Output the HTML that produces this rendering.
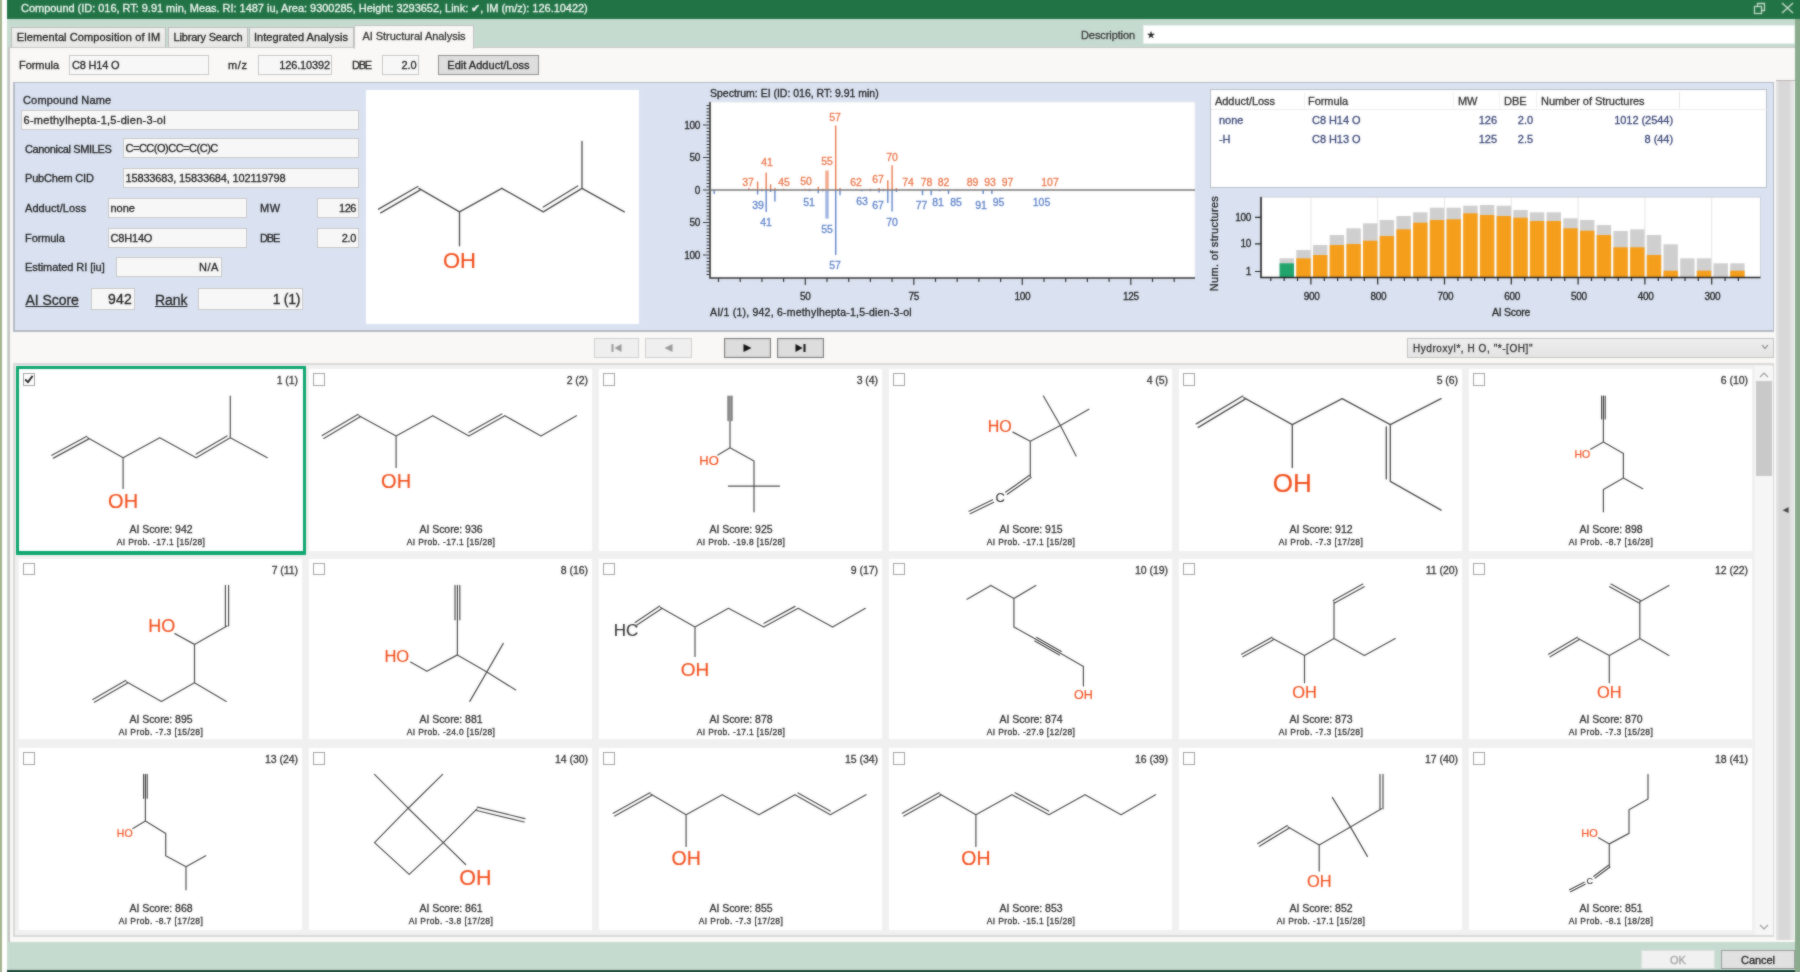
<!DOCTYPE html>
<html><head><meta charset="utf-8"><title>AI Structural Analysis</title>
<style>
html,body{margin:0;padding:0;}
body{width:1800px;height:972px;position:relative;overflow:hidden;background:#f9f8f7;font-family:"Liberation Sans",sans-serif;}
body div{position:absolute;box-sizing:border-box;}
.t{white-space:nowrap;letter-spacing:-0.05px;-webkit-text-stroke:0.3px currentColor;}
.inp{background:#f7f7f7;border:1px solid #c6c6c6;box-shadow:inset 0 0 0 1px #fbfbfb;}
svg{position:absolute;left:0;top:0;overflow:visible;}
svg text{font-family:"Liberation Sans",sans-serif;}
#w{left:-20px;top:-20px;width:1840px;height:1012px;filter:url(#soft);}
#c{left:20px;top:20px;width:1800px;height:972px;}
</style></head><body>
<svg width="0" height="0" style="position:absolute"><defs><filter id="soft" x="0" y="0" width="100%" height="100%" color-interpolation-filters="sRGB"><feGaussianBlur stdDeviation="0.8" result="b"/><feComposite in="SourceGraphic" in2="b" operator="arithmetic" k1="0" k2="0.5" k3="0.5" k4="0"/></filter></defs></svg>
<div id="w"><div id="c">
<div style="left:-20px;top:-20px;width:22.4px;height:1012px;background:#a3b48e;"></div>
<div style="left:2.4px;top:-20px;width:5px;height:1012px;background:#ffffff;"></div>
<div style="left:7px;top:18px;width:1788px;height:952px;background:#c6dbd0;"></div>
<div style="left:1795px;top:0px;width:25px;height:992px;background:#8aab8e;"></div>
<div style="left:7px;top:-20px;width:1813px;height:38.5px;background:#217346;"></div>
<div class="t" style="top:0.6px;height:14px;line-height:14px;font-size:11px;color:#f4f8f4;left:21px;letter-spacing:-0.03px;">Compound (ID: 016, RT: 9.91 min, Meas. RI: 1487 iu, Area: 9300285, Height: 3293652, Link: &#10004;, IM (m/z): 126.10422)</div>
<svg width="1800" height="20"><g fill="none" stroke="#c3d8c6" stroke-width="1.3"><rect x="1754.5" y="6.5" width="7" height="7"/><path d="M1757.5 6.5v-3h7v7h-3"/><path d="M1782 3l11 10M1793 3l-11 10" stroke-width="1.5"/></g></svg>
<div style="left:7px;top:969.5px;width:1788px;height:23px;background:#1e4a3c;"></div>
<div style="left:8px;top:47px;width:1787px;height:894.5px;background:#f9f8f7;border-left:2px solid #c4c4c4;border-top:1px solid #c8c8c8;"></div>
<div style="left:1776px;top:80px;width:19px;height:860px;background:linear-gradient(to right,#e3e3e3 0,#e1e1e1 2px,#d8d8d8 3px,#d8d8d8 13.5px,#e2e2e2 14.5px,#e6e6e6 17.5px,#f8f8f8 18.2px);border-top:1px solid #bdb6b3;"></div>
<div class="t" style="top:505.8px;height:8px;line-height:8px;font-size:6.5px;color:#444;left:1778.5px;width:14px;text-align:center;">&#9664;</div>
<div style="left:11px;top:27px;width:155px;height:20px;background:linear-gradient(#efefee,#e8e8e7);border:1px solid #bcbcbc;border-bottom:none;"></div>
<div class="t" style="top:30.0px;height:14px;line-height:14px;font-size:11px;color:#222;left:11.0px;width:155px;text-align:center;letter-spacing:0.10px;">Elemental Composition of IM</div>
<div style="left:168px;top:27px;width:80px;height:20px;background:linear-gradient(#efefee,#e8e8e7);border:1px solid #bcbcbc;border-bottom:none;"></div>
<div class="t" style="top:30.0px;height:14px;line-height:14px;font-size:11px;color:#222;left:168.0px;width:80px;text-align:center;letter-spacing:-0.19px;">Library Search</div>
<div style="left:248.5px;top:27px;width:105.0px;height:20px;background:linear-gradient(#efefee,#e8e8e7);border:1px solid #bcbcbc;border-bottom:none;"></div>
<div class="t" style="top:30.0px;height:14px;line-height:14px;font-size:11px;color:#222;left:248.5px;width:105.0px;text-align:center;letter-spacing:0.06px;">Integrated Analysis</div>
<div style="left:354px;top:24.5px;width:120px;height:24.5px;background:#f9f8f7;border:1px solid #c2c2c2;border-bottom:none;"></div>
<div class="t" style="top:29.0px;height:14px;line-height:14px;font-size:11px;color:#333;left:354.0px;width:120px;text-align:center;letter-spacing:-0.04px;">AI Structural Analysis</div>
<div class="t" style="top:28.0px;height:14px;line-height:14px;font-size:11px;color:#3a3a3a;left:1081px;letter-spacing:-0.09px;">Description</div>
<div style="left:1143px;top:24.5px;width:652px;height:19px;background:#fff;border:1px solid #eaf0ec;"></div>
<div class="t" style="top:29.5px;height:11px;line-height:11px;font-size:8.5px;color:#222;left:1146.5px;">&#9733;</div>
<div class="t" style="top:58.0px;height:14px;line-height:14px;font-size:11px;color:#222;left:19px;letter-spacing:-0.05px;">Formula</div>
<div class="inp" style="left:69px;top:55px;width:140px;height:20px;"></div>
<div class="t" style="top:58.0px;height:14px;line-height:14px;font-size:11px;color:#222;left:72px;letter-spacing:-0.20px;">C8 H14 O</div>
<div class="t" style="top:58.0px;height:14px;line-height:14px;font-size:11px;color:#222;left:228px;letter-spacing:0.63px;">m/z</div>
<div class="inp" style="left:258px;top:55px;width:74px;height:20px;"></div>
<div class="t" style="top:58.0px;height:14px;line-height:14px;font-size:11px;color:#222;right:1470px;text-align:right;letter-spacing:-0.14px;">126.10392</div>
<div class="t" style="top:58.0px;height:14px;line-height:14px;font-size:11px;color:#222;left:352px;letter-spacing:-1.21px;">DBE</div>
<div class="inp" style="left:382px;top:55px;width:37px;height:20px;"></div>
<div class="t" style="top:58.0px;height:14px;line-height:14px;font-size:11px;color:#222;right:1383.5px;text-align:right;letter-spacing:-0.10px;">2.0</div>
<div style="left:438px;top:55px;width:101px;height:20px;background:#dedede;border:1px solid #8f8f8f;"></div>
<div class="t" style="top:58.0px;height:14px;line-height:14px;font-size:11px;color:#222;left:438.0px;width:101px;text-align:center;letter-spacing:0.02px;">Edit Adduct/Loss</div>
<div style="left:13px;top:82px;width:1761px;height:250px;background:#dae2f1;border:1px solid #b3b8c3;border-width:1px 1px 2px 2px;"></div>
<div class="t" style="top:93.0px;height:14px;line-height:14px;font-size:11px;color:#222;left:23px;letter-spacing:0.16px;">Compound Name</div>
<div class="inp" style="left:21px;top:110px;width:338px;height:20px;"></div>
<div class="t" style="top:113.0px;height:14px;line-height:14px;font-size:11px;color:#222;left:23.5px;letter-spacing:0.27px;">6-methylhepta-1,5-dien-3-ol</div>
<div class="t" style="top:142.0px;height:14px;line-height:14px;font-size:11px;color:#222;left:25px;letter-spacing:-0.37px;">Canonical SMILES</div>
<div class="inp" style="left:123px;top:138px;width:236px;height:20px;"></div>
<div class="t" style="top:141.0px;height:14px;line-height:14px;font-size:11px;color:#222;left:125.5px;letter-spacing:-0.49px;">C=CC(O)CC=C(C)C</div>
<div class="t" style="top:171.0px;height:14px;line-height:14px;font-size:11px;color:#222;left:25px;letter-spacing:-0.20px;">PubChem CID</div>
<div class="inp" style="left:123px;top:168px;width:236px;height:20px;"></div>
<div class="t" style="top:171.0px;height:14px;line-height:14px;font-size:11px;color:#222;left:125.5px;letter-spacing:-0.15px;">15833683, 15833684, 102119798</div>
<div class="t" style="top:201.0px;height:14px;line-height:14px;font-size:11px;color:#222;left:25px;letter-spacing:0.08px;">Adduct/Loss</div>
<div class="inp" style="left:108px;top:198px;width:139px;height:20px;"></div>
<div class="t" style="top:201.0px;height:14px;line-height:14px;font-size:11px;color:#222;left:110.5px;letter-spacing:-0.04px;">none</div>
<div class="t" style="top:201.0px;height:14px;line-height:14px;font-size:11px;color:#222;left:260px;letter-spacing:0.58px;">MW</div>
<div class="inp" style="left:317px;top:198px;width:42px;height:20px;"></div>
<div class="t" style="top:201.0px;height:14px;line-height:14px;font-size:11px;color:#222;right:1444px;text-align:right;letter-spacing:-0.45px;">126</div>
<div class="t" style="top:231.0px;height:14px;line-height:14px;font-size:11px;color:#222;left:25px;letter-spacing:-0.09px;">Formula</div>
<div class="inp" style="left:108px;top:228px;width:139px;height:20px;"></div>
<div class="t" style="top:231.0px;height:14px;line-height:14px;font-size:11px;color:#222;left:110.5px;letter-spacing:-0.18px;">C8H14O</div>
<div class="t" style="top:231.0px;height:14px;line-height:14px;font-size:11px;color:#222;left:260px;letter-spacing:-1.11px;">DBE</div>
<div class="inp" style="left:317px;top:228px;width:42px;height:20px;"></div>
<div class="t" style="top:231.0px;height:14px;line-height:14px;font-size:11px;color:#222;right:1444px;text-align:right;letter-spacing:-0.33px;">2.0</div>
<div class="t" style="top:260.0px;height:14px;line-height:14px;font-size:11px;color:#222;left:25px;letter-spacing:-0.06px;">Estimated RI [iu]</div>
<div class="inp" style="left:116px;top:257px;width:106px;height:20px;"></div>
<div class="t" style="top:260.0px;height:14px;line-height:14px;font-size:11px;color:#222;right:1581px;text-align:right;letter-spacing:0.55px;">N/A</div>
<div class="t" style="top:291.0px;height:18px;line-height:18px;font-size:14px;color:#222;left:25.5px;letter-spacing:-0.05px;text-decoration:underline;">AI Score</div>
<div class="inp" style="left:91px;top:288px;width:44px;height:22px;"></div>
<div class="t" style="top:290.0px;height:18px;line-height:18px;font-size:14px;color:#222;right:1668px;text-align:right;letter-spacing:0.21px;">942</div>
<div class="t" style="top:291.0px;height:18px;line-height:18px;font-size:14px;color:#222;left:155px;letter-spacing:-0.10px;text-decoration:underline;">Rank</div>
<div class="inp" style="left:198px;top:288px;width:105px;height:22px;"></div>
<div class="t" style="top:290.0px;height:18px;line-height:18px;font-size:14px;color:#222;right:1500px;text-align:right;letter-spacing:-0.30px;">1 (1)</div>
<div style="left:366px;top:90px;width:273px;height:234px;background:#fff;"></div>
<div class="t" style="top:86.0px;height:14px;line-height:14px;font-size:10.5px;color:#222;left:710px;letter-spacing:-0.01px;">Spectrum: EI (ID: 016, RT: 9.91 min)</div>
<svg width="1800" height="340"><rect x="710" y="102" width="485" height="176" fill="#fff" stroke="#e6e9ee" stroke-width="1"/><path d="M710 102V278H1195" fill="none" stroke="#333" stroke-width="1.6"/><path d="M710 190H1195" stroke="#777" stroke-width="1.2"/><path d="M706.5 274.5H710M706.5 271.2H710M706.5 268.0H710M706.5 264.8H710M706.5 261.5H710M706.5 258.2H710M703.0 255.0H710M706.5 251.8H710M706.5 248.5H710M706.5 245.2H710M706.5 242.0H710M706.5 238.8H710M706.5 235.5H710M706.5 232.2H710M706.5 229.0H710M706.5 225.8H710M703.0 222.5H710M706.5 219.2H710M706.5 216.0H710M706.5 212.8H710M706.5 209.5H710M706.5 206.2H710M706.5 203.0H710M706.5 199.8H710M706.5 196.5H710M706.5 193.2H710M703.0 190.0H710M706.5 186.8H710M706.5 183.5H710M706.5 180.2H710M706.5 177.0H710M706.5 173.8H710M706.5 170.5H710M706.5 167.2H710M706.5 164.0H710M706.5 160.8H710M703.0 157.5H710M706.5 154.2H710M706.5 151.0H710M706.5 147.8H710M706.5 144.5H710M706.5 141.2H710M706.5 138.0H710M706.5 134.8H710M706.5 131.5H710M706.5 128.2H710M703.0 125.0H710M706.5 121.8H710M706.5 118.5H710M706.5 115.2H710M706.5 112.0H710M706.5 108.8H710M706.5 105.5H710" stroke="#333" stroke-width="1"/><path d="M718.5 278V282M740.2 278V282M761.9 278V282M783.6 278V282M805.3 278V285M827.0 278V282M848.7 278V282M870.4 278V282M892.1 278V282M913.8 278V285M935.5 278V282M957.2 278V282M978.9 278V282M1000.6 278V282M1022.3 278V285M1044.0 278V282M1065.7 278V282M1087.4 278V282M1109.1 278V282M1130.8 278V285M1152.5 278V282M1174.2 278V282" stroke="#333" stroke-width="1.2"/><path d="M748.9 190V188.1M753.2 190V188.7M757.6 190V181.6M761.9 190V188.7M766.2 190V172.4M770.6 190V184.2M774.9 190V188.1M783.6 190V188.7M805.3 190V188.7M809.6 190V188.7M818.3 190V186.8M822.7 190V188.7M835.7 190V125.6M840.0 190V188.1M857.4 190V189.3M870.4 190V188.7M879.1 190V188.1M883.4 190V188.7M887.8 190V180.2M892.1 190V165.3M896.4 190V188.1M909.5 190V189.3M944.2 190V189.3M974.6 190V189.3M1009.3 190V189.3M1052.7 190V189.3" stroke="#e9774c" stroke-width="1.4"/><path d="M714.2 190V193.9M757.6 190V194.6M761.9 190V191.3M766.2 190V212.1M770.6 190V191.9M774.9 190V201.4M809.6 190V191.3M818.3 190V193.2M822.7 190V191.3M835.7 190V255.0M840.0 190V195.2M861.7 190V191.3M870.4 190V191.3M879.1 190V192.6M883.4 190V191.3M887.8 190V203.0M892.1 190V211.4M896.4 190V191.9M922.5 190V195.2M931.2 190V195.2M939.8 190V191.3M948.5 190V193.9M957.2 190V190.7M983.2 190V193.9M991.9 190V193.9M1000.6 190V190.7M1044.0 190V190.7" stroke="#5f83c9" stroke-width="1.4"/><path d="M827.0 190V170.5" stroke="#f1a98b" stroke-width="3.4"/><path d="M827.0 190V218.6" stroke="#9fb5e1" stroke-width="3.4"/><path d="M710 190H1195" stroke="#777" stroke-width="1.2"/><g font-size="10.5" fill="#e9774c" stroke="#e9774c" stroke-width="0.3" text-anchor="middle"><text x="748" y="185.5">37</text><text x="767" y="165.5">41</text><text x="784" y="185.5">45</text><text x="806" y="184.5">50</text><text x="827" y="164.5">55</text><text x="835" y="120.5">57</text><text x="856" y="185.5">62</text><text x="878" y="182.5">67</text><text x="892" y="160.5">70</text><text x="908" y="185.5">74</text><text x="926.5" y="185.5">78</text><text x="943.5" y="185.5">82</text><text x="972.5" y="185.5">89</text><text x="990" y="185.5">93</text><text x="1007.5" y="185.5">97</text><text x="1050" y="185.5">107</text></g><g font-size="10.5" fill="#5f83c9" stroke="#5f83c9" stroke-width="0.3" text-anchor="middle"><text x="758" y="208.5">39</text><text x="766" y="225.5">41</text><text x="809" y="205.5">51</text><text x="827" y="232.5">55</text><text x="835" y="268.5">57</text><text x="862" y="204.5">63</text><text x="878" y="208.5">67</text><text x="892" y="225.5">70</text><text x="921.5" y="209.0">77</text><text x="938" y="206.0">81</text><text x="956" y="205.5">85</text><text x="981" y="208.5">91</text><text x="998.5" y="205.5">95</text><text x="1041.5" y="206.0">105</text></g><g font-size="10" fill="#222" stroke="#222" stroke-width="0.3" text-anchor="end" letter-spacing="-0.3"><text x="700" y="128.5">100</text><text x="700" y="161.0">50</text><text x="700" y="193.5">0</text><text x="700" y="226.0">50</text><text x="700" y="258.5">100</text></g><g font-size="10" fill="#222" stroke="#222" stroke-width="0.3" text-anchor="middle" letter-spacing="-0.3"><text x="805.3" y="300">50</text><text x="913.8" y="300">75</text><text x="1022.3" y="300">100</text><text x="1130.8" y="300">125</text></g></svg>
<div class="t" style="top:305.0px;height:14px;line-height:14px;font-size:10.5px;color:#222;left:710px;letter-spacing:0.22px;">AI/1 (1), 942, 6-methylhepta-1,5-dien-3-ol</div>
<div style="left:1210px;top:89px;width:557px;height:99px;background:#fff;border:1px solid #b9bdc6;"></div>
<div style="left:1211px;top:109px;width:556px;height:1px;background:#ececec;"></div>
<div style="left:1679px;top:92px;width:1px;height:16px;background:#e2e2e2;"></div>
<div style="left:1304px;top:92px;width:1px;height:16px;background:#f0f0f0;"></div>
<div style="left:1453px;top:92px;width:1px;height:16px;background:#f0f0f0;"></div>
<div style="left:1499px;top:92px;width:1px;height:16px;background:#f0f0f0;"></div>
<div style="left:1536px;top:92px;width:1px;height:16px;background:#f0f0f0;"></div>
<div class="t" style="top:94.0px;height:14px;line-height:14px;font-size:11px;color:#333;left:1215px;">Adduct/Loss</div>
<div class="t" style="top:94.0px;height:14px;line-height:14px;font-size:11px;color:#333;left:1308px;">Formula</div>
<div class="t" style="top:94.0px;height:14px;line-height:14px;font-size:11px;color:#333;left:1458px;">MW</div>
<div class="t" style="top:94.0px;height:14px;line-height:14px;font-size:11px;color:#333;left:1504px;">DBE</div>
<div class="t" style="top:94.0px;height:14px;line-height:14px;font-size:11px;color:#333;left:1541px;">Number of Structures</div>
<div class="t" style="top:113.0px;height:14px;line-height:14px;font-size:11px;color:#3c4877;left:1219px;">none</div>
<div class="t" style="top:113.0px;height:14px;line-height:14px;font-size:11px;color:#3c4877;left:1312px;">C8 H14 O</div>
<div class="t" style="top:113.0px;height:14px;line-height:14px;font-size:11px;color:#3c4877;right:303px;text-align:right;">126</div>
<div class="t" style="top:113.0px;height:14px;line-height:14px;font-size:11px;color:#3c4877;right:267px;text-align:right;">2.0</div>
<div class="t" style="top:113.0px;height:14px;line-height:14px;font-size:11px;color:#3c4877;right:127px;text-align:right;">1012 (2544)</div>
<div class="t" style="top:132.0px;height:14px;line-height:14px;font-size:11px;color:#3c4877;left:1219px;">-H</div>
<div class="t" style="top:132.0px;height:14px;line-height:14px;font-size:11px;color:#3c4877;left:1312px;">C8 H13 O</div>
<div class="t" style="top:132.0px;height:14px;line-height:14px;font-size:11px;color:#3c4877;right:303px;text-align:right;">125</div>
<div class="t" style="top:132.0px;height:14px;line-height:14px;font-size:11px;color:#3c4877;right:267px;text-align:right;">2.5</div>
<div class="t" style="top:132.0px;height:14px;line-height:14px;font-size:11px;color:#3c4877;right:127px;text-align:right;">8 (44)</div>
<svg width="1800" height="340"><rect x="1261" y="197" width="499.5" height="80.5" fill="#fff" stroke="#c9ced8" stroke-width="1"/><path d="M1310.9 197V277.5M1377.7 197V277.5M1444.5 197V277.5M1511.3 197V277.5M1578.1 197V277.5M1644.9 197V277.5M1711.7 197V277.5" stroke="#e4e4e4" stroke-width="1"/><rect x="1279.6" y="258.3" width="14.4" height="19.2" fill="#cfcfcf"/><rect x="1279.6" y="263.3" width="14.4" height="14.2" fill="#21a56d"/><rect x="1296.3" y="250.0" width="14.4" height="27.5" fill="#cfcfcf"/><rect x="1296.3" y="258.3" width="14.4" height="19.2" fill="#f59e1b"/><rect x="1313.0" y="245.0" width="14.4" height="32.5" fill="#cfcfcf"/><rect x="1313.0" y="255.0" width="14.4" height="22.5" fill="#f59e1b"/><rect x="1329.7" y="235.0" width="14.4" height="42.5" fill="#cfcfcf"/><rect x="1329.7" y="245.0" width="14.4" height="32.5" fill="#f59e1b"/><rect x="1346.4" y="228.3" width="14.4" height="49.2" fill="#cfcfcf"/><rect x="1346.4" y="244.0" width="14.4" height="33.5" fill="#f59e1b"/><rect x="1363.0" y="223.3" width="14.4" height="54.2" fill="#cfcfcf"/><rect x="1363.0" y="240.7" width="14.4" height="36.8" fill="#f59e1b"/><rect x="1379.7" y="220.0" width="14.4" height="57.5" fill="#cfcfcf"/><rect x="1379.7" y="236.0" width="14.4" height="41.5" fill="#f59e1b"/><rect x="1396.4" y="216.0" width="14.4" height="61.5" fill="#cfcfcf"/><rect x="1396.4" y="229.3" width="14.4" height="48.2" fill="#f59e1b"/><rect x="1413.1" y="212.3" width="14.4" height="65.2" fill="#cfcfcf"/><rect x="1413.1" y="222.7" width="14.4" height="54.8" fill="#f59e1b"/><rect x="1429.8" y="207.7" width="14.4" height="69.8" fill="#cfcfcf"/><rect x="1429.8" y="220.0" width="14.4" height="57.5" fill="#f59e1b"/><rect x="1446.5" y="207.7" width="14.4" height="69.8" fill="#cfcfcf"/><rect x="1446.5" y="219.3" width="14.4" height="58.2" fill="#f59e1b"/><rect x="1463.2" y="205.7" width="14.4" height="71.8" fill="#cfcfcf"/><rect x="1463.2" y="213.3" width="14.4" height="64.2" fill="#f59e1b"/><rect x="1479.9" y="205.0" width="14.4" height="72.5" fill="#cfcfcf"/><rect x="1479.9" y="215.0" width="14.4" height="62.5" fill="#f59e1b"/><rect x="1496.6" y="205.7" width="14.4" height="71.8" fill="#cfcfcf"/><rect x="1496.6" y="216.0" width="14.4" height="61.5" fill="#f59e1b"/><rect x="1513.3" y="210.0" width="14.4" height="67.5" fill="#cfcfcf"/><rect x="1513.3" y="217.7" width="14.4" height="59.8" fill="#f59e1b"/><rect x="1529.9" y="212.3" width="14.4" height="65.2" fill="#cfcfcf"/><rect x="1529.9" y="221.0" width="14.4" height="56.5" fill="#f59e1b"/><rect x="1546.6" y="212.3" width="14.4" height="65.2" fill="#cfcfcf"/><rect x="1546.6" y="221.0" width="14.4" height="56.5" fill="#f59e1b"/><rect x="1563.3" y="218.3" width="14.4" height="59.2" fill="#cfcfcf"/><rect x="1563.3" y="228.3" width="14.4" height="49.2" fill="#f59e1b"/><rect x="1580.0" y="220.0" width="14.4" height="57.5" fill="#cfcfcf"/><rect x="1580.0" y="230.7" width="14.4" height="46.8" fill="#f59e1b"/><rect x="1596.7" y="225.0" width="14.4" height="52.5" fill="#cfcfcf"/><rect x="1596.7" y="235.0" width="14.4" height="42.5" fill="#f59e1b"/><rect x="1613.4" y="231.0" width="14.4" height="46.5" fill="#cfcfcf"/><rect x="1613.4" y="247.3" width="14.4" height="30.2" fill="#f59e1b"/><rect x="1630.1" y="229.3" width="14.4" height="48.2" fill="#cfcfcf"/><rect x="1630.1" y="247.3" width="14.4" height="30.2" fill="#f59e1b"/><rect x="1646.8" y="235.0" width="14.4" height="42.5" fill="#cfcfcf"/><rect x="1646.8" y="255.0" width="14.4" height="22.5" fill="#f59e1b"/><rect x="1663.5" y="244.3" width="14.4" height="33.2" fill="#cfcfcf"/><rect x="1663.5" y="270.7" width="14.4" height="6.8" fill="#f59e1b"/><rect x="1680.2" y="258.3" width="14.4" height="19.2" fill="#cfcfcf"/><rect x="1696.8" y="258.3" width="14.4" height="19.2" fill="#cfcfcf"/><rect x="1696.8" y="270.7" width="14.4" height="6.8" fill="#f59e1b"/><rect x="1713.5" y="263.3" width="14.4" height="14.2" fill="#cfcfcf"/><rect x="1730.2" y="263.3" width="14.4" height="14.2" fill="#cfcfcf"/><rect x="1730.2" y="270.7" width="14.4" height="6.8" fill="#f59e1b"/><path d="M1261 197V277.5H1760.5" fill="none" stroke="#222" stroke-width="1.6"/><path d="M1270.8 277.5V281.0M1284.2 277.5V281.0M1297.5 277.5V281.0M1310.9 277.5V284.5M1324.3 277.5V281.0M1337.6 277.5V281.0M1351.0 277.5V281.0M1364.3 277.5V281.0M1377.7 277.5V284.5M1391.1 277.5V281.0M1404.4 277.5V281.0M1417.8 277.5V281.0M1431.1 277.5V281.0M1444.5 277.5V284.5M1457.9 277.5V281.0M1471.2 277.5V281.0M1484.6 277.5V281.0M1497.9 277.5V281.0M1511.3 277.5V284.5M1524.7 277.5V281.0M1538.0 277.5V281.0M1551.4 277.5V281.0M1564.7 277.5V281.0M1578.1 277.5V284.5M1591.5 277.5V281.0M1604.8 277.5V281.0M1618.2 277.5V281.0M1631.5 277.5V281.0M1644.9 277.5V284.5M1658.3 277.5V281.0M1671.6 277.5V281.0M1685.0 277.5V281.0M1698.3 277.5V281.0M1711.7 277.5V284.5M1725.1 277.5V281.0M1738.4 277.5V281.0" stroke="#222" stroke-width="1.2"/><path d="M1255 217.3H1261M1255 243.8H1261M1255 271.5H1261" stroke="#222" stroke-width="1.2"/><g font-size="10" fill="#222" stroke="#222" stroke-width="0.3" text-anchor="end" letter-spacing="-0.3"><text x="1251" y="220.8">100</text><text x="1251" y="247.3">10</text><text x="1251" y="275.0">1</text></g><g font-size="10" fill="#222" stroke="#222" stroke-width="0.3" text-anchor="middle" letter-spacing="-0.3"><text x="1311.7" y="299.5">900</text><text x="1378.5" y="299.5">800</text><text x="1445.3" y="299.5">700</text><text x="1512.1" y="299.5">600</text><text x="1578.9" y="299.5">500</text><text x="1645.7" y="299.5">400</text><text x="1712.5" y="299.5">300</text><text x="1511" y="316" font-size="10.5">AI Score</text><text transform="translate(1218,243.5) rotate(-90)" font-size="11" letter-spacing="0.3">Num. of structures</text></g></svg>
<div style="left:594px;top:337.5px;width:45px;height:20.5px;background:#efefef;border:1px solid #cfcfcf;"></div>
<svg width="1800" height="400"><path d="M611.5 344h2v8h-2z M621.5 344v8l-7-4z" fill="#9a9a9a"/></svg>
<div style="left:645px;top:337.5px;width:47px;height:20.5px;background:#efefef;border:1px solid #cfcfcf;"></div>
<svg width="1800" height="400"><path d="M672.5 344v8l-8-4z" fill="#9a9a9a"/></svg>
<div style="left:724px;top:337.5px;width:47px;height:20.5px;background:#dddddd;border:1px solid #7d7d7d;box-shadow:inset 0 0 0 1px #cfcfcf;"></div>
<svg width="1800" height="400"><path d="M743.5 344v8l8-4z" fill="#111"/></svg>
<div style="left:777px;top:337.5px;width:47px;height:20.5px;background:#dddddd;border:1px solid #7d7d7d;box-shadow:inset 0 0 0 1px #cfcfcf;"></div>
<svg width="1800" height="400"><path d="M803.5 344h2v8h-2z M795.5 344v8l7-4z" fill="#111"/></svg>
<div style="left:1406.5px;top:337.5px;width:367.5px;height:20.5px;background:linear-gradient(#eeeeee,#e4e4e4);border:1px solid #c3c3c3;"></div>
<div class="t" style="top:341.8px;height:13px;line-height:13px;font-size:10px;color:#333;left:1413px;letter-spacing:0.56px;">Hydroxyl*, H O, "*-[OH]"</div>
<svg width="1800" height="400"><path d="M1762 345l3 3.5l3-3.5" fill="none" stroke="#777" stroke-width="1.1"/></svg>
<div style="left:13px;top:363px;width:1761px;height:574px;background:#f0f0f0;border:2px solid #d9d9d9;"></div>
<div style="left:1755px;top:366px;width:18px;height:569px;background:#f6f6f6;"></div>
<div style="left:1756px;top:381px;width:16px;height:95px;background:#c9c9c9;"></div>
<svg width="1800" height="972"><path d="M1760 377l4-4l4 4M1760 925l4 4l4-4" fill="none" stroke="#999" stroke-width="1.1"/></svg>
<div style="left:16px;top:366px;width:289.5px;height:188.5px;background:#fff;border:3px solid #0ba56d;border-bottom-width:4px;"></div>
<div style="left:22.7px;top:373.0px;width:12.5px;height:12.5px;background:#fff;border:1px solid #a2a2a2;"></div>
<svg width="1800" height="972"><path d="M25.2 379.5l2.8 2.6l4.6-6.2" fill="none" stroke="#222" stroke-width="1.8"/></svg>
<div class="t" style="top:372.7px;height:14px;line-height:14px;font-size:10.5px;color:#333;right:1502px;text-align:right;">1 (1)</div>
<div class="t" style="top:522.0px;height:14px;line-height:14px;font-size:10.5px;color:#333;left:61.0px;width:200px;text-align:center;">AI Score: 942</div>
<div class="t" style="top:537.4px;height:11px;line-height:11px;font-size:8.5px;color:#333;left:61.0px;width:200px;text-align:center;letter-spacing:0.35px;">AI Prob. -17.1 [15/28]</div>
<div style="left:309px;top:368.7px;width:282.5px;height:182px;background:#fff;"></div>
<div style="left:312.7px;top:373.0px;width:12.5px;height:12.5px;background:#fff;border:1px solid #a2a2a2;"></div>
<div class="t" style="top:372.7px;height:14px;line-height:14px;font-size:10.5px;color:#333;right:1212px;text-align:right;">2 (2)</div>
<div class="t" style="top:522.0px;height:14px;line-height:14px;font-size:10.5px;color:#333;left:351.0px;width:200px;text-align:center;">AI Score: 936</div>
<div class="t" style="top:537.4px;height:11px;line-height:11px;font-size:8.5px;color:#333;left:351.0px;width:200px;text-align:center;letter-spacing:0.35px;">AI Prob. -17.1 [15/28]</div>
<div style="left:599px;top:368.7px;width:282.5px;height:182px;background:#fff;"></div>
<div style="left:602.7px;top:373.0px;width:12.5px;height:12.5px;background:#fff;border:1px solid #a2a2a2;"></div>
<div class="t" style="top:372.7px;height:14px;line-height:14px;font-size:10.5px;color:#333;right:922px;text-align:right;">3 (4)</div>
<div class="t" style="top:522.0px;height:14px;line-height:14px;font-size:10.5px;color:#333;left:641.0px;width:200px;text-align:center;">AI Score: 925</div>
<div class="t" style="top:537.4px;height:11px;line-height:11px;font-size:8.5px;color:#333;left:641.0px;width:200px;text-align:center;letter-spacing:0.35px;">AI Prob. -19.8 [15/28]</div>
<div style="left:889px;top:368.7px;width:282.5px;height:182px;background:#fff;"></div>
<div style="left:892.7px;top:373.0px;width:12.5px;height:12.5px;background:#fff;border:1px solid #a2a2a2;"></div>
<div class="t" style="top:372.7px;height:14px;line-height:14px;font-size:10.5px;color:#333;right:632px;text-align:right;">4 (5)</div>
<div class="t" style="top:522.0px;height:14px;line-height:14px;font-size:10.5px;color:#333;left:931.0px;width:200px;text-align:center;">AI Score: 915</div>
<div class="t" style="top:537.4px;height:11px;line-height:11px;font-size:8.5px;color:#333;left:931.0px;width:200px;text-align:center;letter-spacing:0.35px;">AI Prob. -17.1 [15/28]</div>
<div style="left:1179px;top:368.7px;width:282.5px;height:182px;background:#fff;"></div>
<div style="left:1182.7px;top:373.0px;width:12.5px;height:12.5px;background:#fff;border:1px solid #a2a2a2;"></div>
<div class="t" style="top:372.7px;height:14px;line-height:14px;font-size:10.5px;color:#333;right:342px;text-align:right;">5 (6)</div>
<div class="t" style="top:522.0px;height:14px;line-height:14px;font-size:10.5px;color:#333;left:1221.0px;width:200px;text-align:center;">AI Score: 912</div>
<div class="t" style="top:537.4px;height:11px;line-height:11px;font-size:8.5px;color:#333;left:1221.0px;width:200px;text-align:center;letter-spacing:0.40px;">AI Prob. -7.3 [17/28]</div>
<div style="left:1469px;top:368.7px;width:282.5px;height:182px;background:#fff;"></div>
<div style="left:1472.7px;top:373.0px;width:12.5px;height:12.5px;background:#fff;border:1px solid #a2a2a2;"></div>
<div class="t" style="top:372.7px;height:14px;line-height:14px;font-size:10.5px;color:#333;right:52px;text-align:right;">6 (10)</div>
<div class="t" style="top:522.0px;height:14px;line-height:14px;font-size:10.5px;color:#333;left:1511.0px;width:200px;text-align:center;">AI Score: 898</div>
<div class="t" style="top:537.4px;height:11px;line-height:11px;font-size:8.5px;color:#333;left:1511.0px;width:200px;text-align:center;letter-spacing:0.40px;">AI Prob. -8.7 [16/28]</div>
<div style="left:19px;top:558.5px;width:282.5px;height:180px;background:#fff;"></div>
<div style="left:22.7px;top:562.8px;width:12.5px;height:12.5px;background:#fff;border:1px solid #a2a2a2;"></div>
<div class="t" style="top:562.5px;height:14px;line-height:14px;font-size:10.5px;color:#333;right:1502px;text-align:right;">7 (11)</div>
<div class="t" style="top:711.8px;height:14px;line-height:14px;font-size:10.5px;color:#333;left:61.0px;width:200px;text-align:center;">AI Score: 895</div>
<div class="t" style="top:727.2px;height:11px;line-height:11px;font-size:8.5px;color:#333;left:61.0px;width:200px;text-align:center;letter-spacing:0.40px;">AI Prob. -7.3 [15/28]</div>
<div style="left:309px;top:558.5px;width:282.5px;height:180px;background:#fff;"></div>
<div style="left:312.7px;top:562.8px;width:12.5px;height:12.5px;background:#fff;border:1px solid #a2a2a2;"></div>
<div class="t" style="top:562.5px;height:14px;line-height:14px;font-size:10.5px;color:#333;right:1212px;text-align:right;">8 (16)</div>
<div class="t" style="top:711.8px;height:14px;line-height:14px;font-size:10.5px;color:#333;left:351.0px;width:200px;text-align:center;">AI Score: 881</div>
<div class="t" style="top:727.2px;height:11px;line-height:11px;font-size:8.5px;color:#333;left:351.0px;width:200px;text-align:center;letter-spacing:0.35px;">AI Prob. -24.0 [15/28]</div>
<div style="left:599px;top:558.5px;width:282.5px;height:180px;background:#fff;"></div>
<div style="left:602.7px;top:562.8px;width:12.5px;height:12.5px;background:#fff;border:1px solid #a2a2a2;"></div>
<div class="t" style="top:562.5px;height:14px;line-height:14px;font-size:10.5px;color:#333;right:922px;text-align:right;">9 (17)</div>
<div class="t" style="top:711.8px;height:14px;line-height:14px;font-size:10.5px;color:#333;left:641.0px;width:200px;text-align:center;">AI Score: 878</div>
<div class="t" style="top:727.2px;height:11px;line-height:11px;font-size:8.5px;color:#333;left:641.0px;width:200px;text-align:center;letter-spacing:0.35px;">AI Prob. -17.1 [15/28]</div>
<div style="left:889px;top:558.5px;width:282.5px;height:180px;background:#fff;"></div>
<div style="left:892.7px;top:562.8px;width:12.5px;height:12.5px;background:#fff;border:1px solid #a2a2a2;"></div>
<div class="t" style="top:562.5px;height:14px;line-height:14px;font-size:10.5px;color:#333;right:632px;text-align:right;">10 (19)</div>
<div class="t" style="top:711.8px;height:14px;line-height:14px;font-size:10.5px;color:#333;left:931.0px;width:200px;text-align:center;">AI Score: 874</div>
<div class="t" style="top:727.2px;height:11px;line-height:11px;font-size:8.5px;color:#333;left:931.0px;width:200px;text-align:center;letter-spacing:0.35px;">AI Prob. -27.9 [12/28]</div>
<div style="left:1179px;top:558.5px;width:282.5px;height:180px;background:#fff;"></div>
<div style="left:1182.7px;top:562.8px;width:12.5px;height:12.5px;background:#fff;border:1px solid #a2a2a2;"></div>
<div class="t" style="top:562.5px;height:14px;line-height:14px;font-size:10.5px;color:#333;right:342px;text-align:right;">11 (20)</div>
<div class="t" style="top:711.8px;height:14px;line-height:14px;font-size:10.5px;color:#333;left:1221.0px;width:200px;text-align:center;">AI Score: 873</div>
<div class="t" style="top:727.2px;height:11px;line-height:11px;font-size:8.5px;color:#333;left:1221.0px;width:200px;text-align:center;letter-spacing:0.40px;">AI Prob. -7.3 [15/28]</div>
<div style="left:1469px;top:558.5px;width:282.5px;height:180px;background:#fff;"></div>
<div style="left:1472.7px;top:562.8px;width:12.5px;height:12.5px;background:#fff;border:1px solid #a2a2a2;"></div>
<div class="t" style="top:562.5px;height:14px;line-height:14px;font-size:10.5px;color:#333;right:52px;text-align:right;">12 (22)</div>
<div class="t" style="top:711.8px;height:14px;line-height:14px;font-size:10.5px;color:#333;left:1511.0px;width:200px;text-align:center;">AI Score: 870</div>
<div class="t" style="top:727.2px;height:11px;line-height:11px;font-size:8.5px;color:#333;left:1511.0px;width:200px;text-align:center;letter-spacing:0.40px;">AI Prob. -7.3 [15/28]</div>
<div style="left:19px;top:747.7px;width:282.5px;height:182.3px;background:#fff;"></div>
<div style="left:22.7px;top:752.0px;width:12.5px;height:12.5px;background:#fff;border:1px solid #a2a2a2;"></div>
<div class="t" style="top:751.7px;height:14px;line-height:14px;font-size:10.5px;color:#333;right:1502px;text-align:right;">13 (24)</div>
<div class="t" style="top:901.0px;height:14px;line-height:14px;font-size:10.5px;color:#333;left:61.0px;width:200px;text-align:center;">AI Score: 868</div>
<div class="t" style="top:916.4px;height:11px;line-height:11px;font-size:8.5px;color:#333;left:61.0px;width:200px;text-align:center;letter-spacing:0.40px;">AI Prob. -8.7 [17/28]</div>
<div style="left:309px;top:747.7px;width:282.5px;height:182.3px;background:#fff;"></div>
<div style="left:312.7px;top:752.0px;width:12.5px;height:12.5px;background:#fff;border:1px solid #a2a2a2;"></div>
<div class="t" style="top:751.7px;height:14px;line-height:14px;font-size:10.5px;color:#333;right:1212px;text-align:right;">14 (30)</div>
<div class="t" style="top:901.0px;height:14px;line-height:14px;font-size:10.5px;color:#333;left:351.0px;width:200px;text-align:center;">AI Score: 861</div>
<div class="t" style="top:916.4px;height:11px;line-height:11px;font-size:8.5px;color:#333;left:351.0px;width:200px;text-align:center;letter-spacing:0.40px;">AI Prob. -3.8 [17/28]</div>
<div style="left:599px;top:747.7px;width:282.5px;height:182.3px;background:#fff;"></div>
<div style="left:602.7px;top:752.0px;width:12.5px;height:12.5px;background:#fff;border:1px solid #a2a2a2;"></div>
<div class="t" style="top:751.7px;height:14px;line-height:14px;font-size:10.5px;color:#333;right:922px;text-align:right;">15 (34)</div>
<div class="t" style="top:901.0px;height:14px;line-height:14px;font-size:10.5px;color:#333;left:641.0px;width:200px;text-align:center;">AI Score: 855</div>
<div class="t" style="top:916.4px;height:11px;line-height:11px;font-size:8.5px;color:#333;left:641.0px;width:200px;text-align:center;letter-spacing:0.40px;">AI Prob. -7.3 [17/28]</div>
<div style="left:889px;top:747.7px;width:282.5px;height:182.3px;background:#fff;"></div>
<div style="left:892.7px;top:752.0px;width:12.5px;height:12.5px;background:#fff;border:1px solid #a2a2a2;"></div>
<div class="t" style="top:751.7px;height:14px;line-height:14px;font-size:10.5px;color:#333;right:632px;text-align:right;">16 (39)</div>
<div class="t" style="top:901.0px;height:14px;line-height:14px;font-size:10.5px;color:#333;left:931.0px;width:200px;text-align:center;">AI Score: 853</div>
<div class="t" style="top:916.4px;height:11px;line-height:11px;font-size:8.5px;color:#333;left:931.0px;width:200px;text-align:center;letter-spacing:0.35px;">AI Prob. -15.1 [15/28]</div>
<div style="left:1179px;top:747.7px;width:282.5px;height:182.3px;background:#fff;"></div>
<div style="left:1182.7px;top:752.0px;width:12.5px;height:12.5px;background:#fff;border:1px solid #a2a2a2;"></div>
<div class="t" style="top:751.7px;height:14px;line-height:14px;font-size:10.5px;color:#333;right:342px;text-align:right;">17 (40)</div>
<div class="t" style="top:901.0px;height:14px;line-height:14px;font-size:10.5px;color:#333;left:1221.0px;width:200px;text-align:center;">AI Score: 852</div>
<div class="t" style="top:916.4px;height:11px;line-height:11px;font-size:8.5px;color:#333;left:1221.0px;width:200px;text-align:center;letter-spacing:0.35px;">AI Prob. -17.1 [15/28]</div>
<div style="left:1469px;top:747.7px;width:282.5px;height:182.3px;background:#fff;"></div>
<div style="left:1472.7px;top:752.0px;width:12.5px;height:12.5px;background:#fff;border:1px solid #a2a2a2;"></div>
<div class="t" style="top:751.7px;height:14px;line-height:14px;font-size:10.5px;color:#333;right:52px;text-align:right;">18 (41)</div>
<div class="t" style="top:901.0px;height:14px;line-height:14px;font-size:10.5px;color:#333;left:1511.0px;width:200px;text-align:center;">AI Score: 851</div>
<div class="t" style="top:916.4px;height:11px;line-height:11px;font-size:8.5px;color:#333;left:1511.0px;width:200px;text-align:center;letter-spacing:0.40px;">AI Prob. -8.1 [18/28]</div>
<svg width="1800" height="972"><path d="M378.5 209.2L417.8 186.5M380.7 212.8L420.0 190.1M418.9 188.3L459.5 211.9M459.5 211.9L459.5 245.8M459.5 211.9L501.8 188.3M501.8 188.3L543.3 211.9M543.3 211.9L582.0 188.3M543.3 207.0L577.7 186.0M582.0 188.3L582.0 141.5M582.0 188.3L624.3 211.9" fill="none" stroke="#4c4c4c" stroke-width="1.35" stroke-linecap="round"/><text x="459.5" y="267.6" font-size="22" fill="#f04e1b" stroke="#f04e1b" stroke-width="0.15" text-anchor="middle">OH</text><path d="M51.8 455.3L86.9 436.3M53.4 458.1L88.5 439.1M87.7 437.7L123.1 457.7M123.1 457.7L123.1 488.5M123.1 457.7L159.8 437.7M159.8 437.7L196.2 457.7M196.2 457.7L230.3 437.7M196.2 454.0L227.0 435.9M230.3 437.7L230.3 396.0M230.3 437.7L267.3 457.7" fill="none" stroke="#4c4c4c" stroke-width="1.2" stroke-linecap="round"/><text x="123.1" y="507.5" font-size="20" fill="#f04e1b" stroke="#f04e1b" stroke-width="0.15" text-anchor="middle">OH</text><path d="M322.2 435.6L358.2 414.3M323.8 438.4L359.8 417.1M359.0 415.7L396.1 436.0M396.1 436.0L396.1 467.5M396.1 436.0L432.8 415.7M432.8 415.7L468.9 436.0M468.9 436.0L504.9 415.7M469.0 432.3L501.7 413.9M504.9 415.7L541.0 436.0M541.0 436.0L576.4 415.7" fill="none" stroke="#4c4c4c" stroke-width="1.2" stroke-linecap="round"/><text x="396.1" y="487.5" font-size="20" fill="#f04e1b" stroke="#f04e1b" stroke-width="0.15" text-anchor="middle">OH</text><path d="M731.9 396.0L731.9 420.6M730.0 396.0L730.0 420.6M728.1 396.0L728.1 420.6M730.0 420.6L730.0 447.8M730.0 447.8L717.9 455.0M730.0 447.8L754.0 461.0M754.0 461.0L754.0 486.2M754.0 486.2L728.4 486.2M754.0 486.2L779.5 486.2M754.0 486.2L754.0 511.8" fill="none" stroke="#4c4c4c" stroke-width="1.2" stroke-linecap="round"/><text x="709" y="465.3" font-size="13" fill="#f04e1b" stroke="#f04e1b" stroke-width="0.15" text-anchor="middle">HO</text><path d="M1030.3 441.3L1012.9 432.1M1030.3 441.3L1060.4 425.5M1060.4 425.5L1043.4 396.0M1060.4 425.5L1088.9 409.2M1060.4 425.5L1076.1 456.0M1030.3 441.3L1030.3 476.4M1031.1 477.5L1007.3 494.3M1029.5 475.3L1005.7 492.1M993.8 502.3L970.2 513.8M992.6 499.7L969.0 511.2" fill="none" stroke="#4c4c4c" stroke-width="1.2" stroke-linecap="round"/><text x="999.8" y="432.2" font-size="16" fill="#f04e1b" stroke="#f04e1b" stroke-width="0.15" text-anchor="middle">HO</text><text x="1000.2" y="502.4" font-size="13" fill="#333" stroke="#333" stroke-width="0.15" text-anchor="middle">C</text><path d="M1196.3 423.9L1242.8 396.0M1198.3 427.3L1244.8 399.4M1243.8 397.7L1292.3 424.6M1292.3 424.6L1292.3 467.5M1292.3 424.6L1342.2 398.7M1342.2 398.7L1390.3 424.6M1390.3 424.6L1441.1 398.7M1390.3 424.6L1390.3 481.3M1386.3 427.0L1386.3 478.9M1390.3 481.3L1441.1 510.1" fill="none" stroke="#4c4c4c" stroke-width="1.35" stroke-linecap="round"/><text x="1292.3" y="492.2" font-size="26" fill="#f04e1b" stroke="#f04e1b" stroke-width="0.15" text-anchor="middle">OH</text><path d="M1605.2 396.0L1605.2 419.0M1603.4 396.0L1603.4 419.0M1601.6 396.0L1601.6 419.0M1603.4 419.0L1603.4 442.0M1603.4 442.0L1590.6 449.2M1603.4 442.0L1623.4 453.4M1623.4 453.4L1623.4 478.0M1623.4 478.0L1642.7 488.8M1623.4 478.0L1603.4 489.5M1603.4 489.5L1603.4 511.8" fill="none" stroke="#4c4c4c" stroke-width="1.2" stroke-linecap="round"/><text x="1582.4" y="457.8" font-size="10.5" fill="#f04e1b" stroke="#f04e1b" stroke-width="0.15" text-anchor="middle">HO</text><path d="M228.6 585.4L228.6 626.0M225.4 585.4L225.4 626.0M227.0 626.0L194.5 644.4M194.5 644.4L174.9 633.6M194.5 644.4L194.5 682.7M194.5 682.7L226.3 701.4M194.5 682.7L161.4 701.4M161.4 701.4L126.4 681.8M127.2 683.2L94.4 702.2M125.6 680.4L92.8 699.4" fill="none" stroke="#4c4c4c" stroke-width="1.2" stroke-linecap="round"/><text x="161.8" y="632.4" font-size="18" fill="#f04e1b" stroke="#f04e1b" stroke-width="0.15" text-anchor="middle">HO</text><path d="M459.8 585.4L459.8 619.8M457.4 585.4L457.4 619.8M455.0 585.4L455.0 619.8M457.4 619.8L457.4 654.9M457.4 654.9L426.9 671.3M426.9 671.3L410.5 662.1M457.4 654.9L486.9 671.9M486.9 671.9L503.3 643.4M486.9 671.9L515.7 690.0M486.9 671.9L469.8 701.4" fill="none" stroke="#4c4c4c" stroke-width="1.2" stroke-linecap="round"/><text x="396.8" y="662.4" font-size="16.5" fill="#f04e1b" stroke="#f04e1b" stroke-width="0.15" text-anchor="middle">HO</text><path d="M635.1 622.4L659.7 606.1M636.9 625.0L661.5 608.7M660.6 607.4L695.0 627.0M695.0 627.0L695.0 656.5M695.0 627.0L728.4 608.3M728.4 608.3L763.8 627.0M763.8 627.0L798.2 608.3M764.0 623.3L795.0 606.4M798.2 608.3L832.6 627.0M832.6 627.0L865.4 608.3" fill="none" stroke="#4c4c4c" stroke-width="1.2" stroke-linecap="round"/><text x="626.1" y="635.7" font-size="17" fill="#333" stroke="#333" stroke-width="0.15" text-anchor="middle">HC</text><text x="695" y="675.8" font-size="19" fill="#f04e1b" stroke="#f04e1b" stroke-width="0.15" text-anchor="middle">OH</text><path d="M967.0 599.2L990.9 585.4M990.9 585.4L1013.9 598.5M1013.9 598.5L1035.8 585.4M1013.9 598.5L1013.9 627.0M1013.9 627.0L1035.8 639.2M1036.8 637.4L1061.4 651.4M1035.8 639.2L1060.4 653.2M1034.8 641.0L1059.4 655.0M1060.4 653.2L1083.4 666.4M1083.4 666.4L1083.4 686.0" fill="none" stroke="#4c4c4c" stroke-width="1.2" stroke-linecap="round"/><text x="1083.4" y="698.7" font-size="12.5" fill="#f04e1b" stroke="#f04e1b" stroke-width="0.15" text-anchor="middle">OH</text><path d="M1241.5 654.2L1272.0 637.2M1242.9 656.8L1273.4 639.8M1272.7 638.5L1304.5 655.5M1304.5 655.5L1304.5 682.7M1304.5 655.5L1334.0 638.5M1334.0 638.5L1364.4 655.5M1364.4 655.5L1395.3 638.5M1334.0 638.5L1334.0 601.8M1333.3 600.5L1362.8 584.1M1334.7 603.1L1364.2 586.7" fill="none" stroke="#4c4c4c" stroke-width="1.2" stroke-linecap="round"/><text x="1304.5" y="697.8" font-size="16.4" fill="#f04e1b" stroke="#f04e1b" stroke-width="0.15" text-anchor="middle">OH</text><path d="M1548.5 654.2L1577.3 637.2M1550.1 656.8L1578.9 639.8M1578.1 638.5L1609.3 655.5M1609.3 655.5L1609.3 682.7M1609.3 655.5L1639.8 638.5M1639.8 638.5L1668.9 655.5M1639.8 638.5L1639.8 601.8M1639.1 603.1L1609.6 586.7M1640.5 600.5L1611.0 584.1M1639.8 601.8L1668.9 585.4" fill="none" stroke="#4c4c4c" stroke-width="1.2" stroke-linecap="round"/><text x="1609.3" y="697.8" font-size="16.4" fill="#f04e1b" stroke="#f04e1b" stroke-width="0.15" text-anchor="middle">OH</text><path d="M147.2 774.4L147.2 798.3M145.4 774.4L145.4 798.3M143.6 774.4L143.6 798.3M145.4 798.3L145.4 821.0M145.4 821.0L132.9 828.5M145.4 821.0L165.7 833.4M165.7 833.4L165.7 855.7M165.7 855.7L186.0 866.8M186.0 866.8L205.7 855.7M186.0 866.8L186.0 889.8" fill="none" stroke="#4c4c4c" stroke-width="1.2" stroke-linecap="round"/><text x="124.7" y="836.6" font-size="10.5" fill="#f04e1b" stroke="#f04e1b" stroke-width="0.15" text-anchor="middle">HO</text><path d="M408.2 808.2L443.3 842.6M443.3 842.6L409.2 874.4M409.2 874.4L374.5 842.6M374.5 842.6L408.2 808.2M408.2 808.2L374.5 774.4M408.2 808.2L442.6 774.4M443.3 842.6L477.0 808.8M477.4 807.1L525.0 818.6M476.6 810.5L524.2 822.0M443.3 842.6L465.6 864.5" fill="none" stroke="#4c4c4c" stroke-width="1.2" stroke-linecap="round"/><text x="475.4" y="885.4" font-size="21.5" fill="#f04e1b" stroke="#f04e1b" stroke-width="0.15" text-anchor="middle">OH</text><path d="M613.2 813.3L649.9 792.7M614.8 816.1L651.5 795.5M650.7 794.1L686.1 814.7M686.1 814.7L686.1 846.5M686.1 814.7L722.2 794.7M722.2 794.7L758.9 814.7M758.9 814.7L794.9 794.7M794.9 794.7L830.3 814.7M798.1 792.9L830.2 811.0M830.3 814.7L866.0 794.7" fill="none" stroke="#4c4c4c" stroke-width="1.2" stroke-linecap="round"/><text x="686.1" y="865.0" font-size="19.5" fill="#f04e1b" stroke="#f04e1b" stroke-width="0.15" text-anchor="middle">OH</text><path d="M902.3 813.3L939.0 792.7M903.9 816.1L940.6 795.5M939.8 794.1L975.9 814.7M975.9 814.7L975.9 846.5M975.9 814.7L1011.9 794.7M1011.9 794.7L1048.9 814.7M1015.1 792.8L1048.7 811.0M1048.9 814.7L1085.0 794.7M1085.0 794.7L1121.1 814.7M1121.1 814.7L1155.5 794.7" fill="none" stroke="#4c4c4c" stroke-width="1.2" stroke-linecap="round"/><text x="975.9" y="865.0" font-size="19.5" fill="#f04e1b" stroke="#f04e1b" stroke-width="0.15" text-anchor="middle">OH</text><path d="M1257.8 843.6L1287.3 825.6M1259.4 846.2L1288.9 828.2M1288.1 826.9L1319.2 844.9M1319.2 844.9L1319.2 871.1M1319.2 844.9L1350.4 826.9M1350.4 826.9L1332.3 797.4M1350.4 826.9L1367.4 856.4M1350.4 826.9L1381.5 808.8M1380.0 808.8L1380.0 774.4M1383.0 808.8L1383.0 774.4" fill="none" stroke="#4c4c4c" stroke-width="1.2" stroke-linecap="round"/><text x="1319.2" y="886.8" font-size="16.4" fill="#f04e1b" stroke="#f04e1b" stroke-width="0.15" text-anchor="middle">OH</text><path d="M1648.0 774.4L1648.0 799.0M1648.0 799.0L1629.0 809.8M1629.0 809.8L1629.0 833.4M1629.0 833.4L1609.3 843.9M1609.3 843.9L1598.5 837.7M1609.3 843.9L1609.3 866.2M1610.0 867.1L1595.2 878.1M1608.6 865.3L1593.8 876.3M1585.2 884.2L1570.5 891.8M1584.2 882.2L1569.5 889.8" fill="none" stroke="#4c4c4c" stroke-width="1.2" stroke-linecap="round"/><text x="1589.6" y="836.7" font-size="11" fill="#f04e1b" stroke="#f04e1b" stroke-width="0.15" text-anchor="middle">HO</text><text x="1589.8" y="883.5" font-size="9" fill="#333" stroke="#333" stroke-width="0.15" text-anchor="middle">C</text></svg>
<div style="left:1641px;top:950px;width:74px;height:19px;background:#f1f1f1;border:1px solid #d9dedb;"></div>
<div class="t" style="top:952.5px;height:14px;line-height:14px;font-size:11px;color:#a3a3a3;left:1643.0px;width:70px;text-align:center;">OK</div>
<div style="left:1721px;top:950px;width:74px;height:19px;background:#e1e1e1;border:1px solid #9a9a9a;"></div>
<div class="t" style="top:952.5px;height:14px;line-height:14px;font-size:11px;color:#222;left:1723.0px;width:70px;text-align:center;">Cancel</div>
</div></div></body></html>
